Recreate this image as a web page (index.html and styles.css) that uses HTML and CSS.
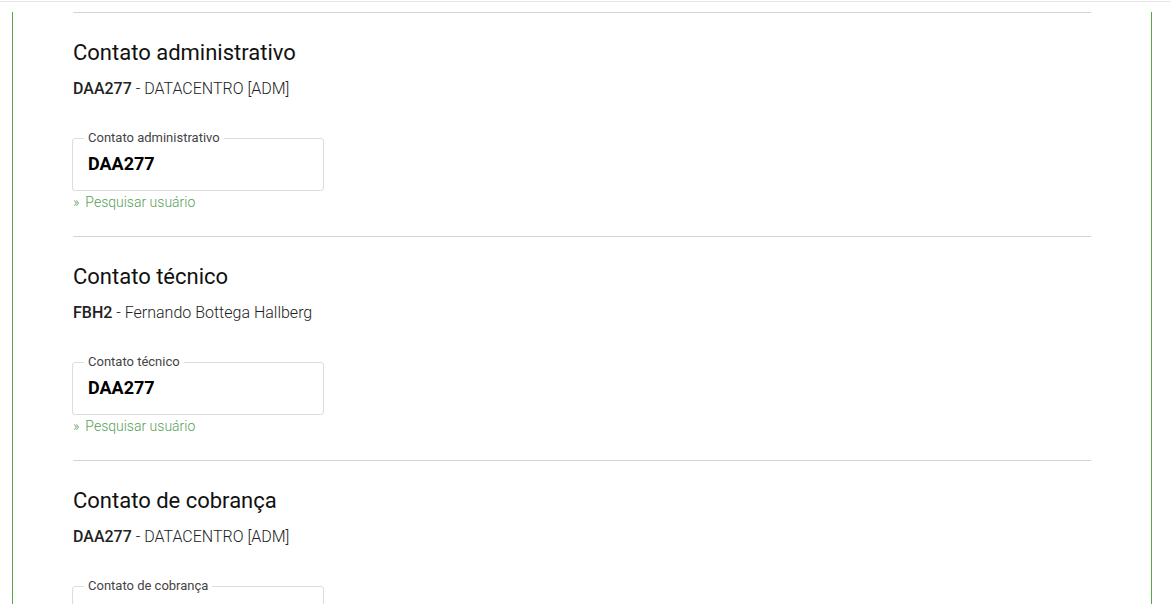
FILE: index.html
```html
<!DOCTYPE html>
<html lang="pt-BR">
<head>
<meta charset="utf-8">
<title>Contatos</title>
<link rel="stylesheet" href="styles.css">
</head>
<body>
<div class="topline"></div>
<main class="panel">
  <section class="contact">
    <h2 class="contact-title">Contato administrativo</h2>
    <p class="contact-current"><strong>DAA277</strong> - DATACENTRO [ADM]</p>
    <fieldset class="field">
      <legend class="field-label">Contato administrativo</legend>
      <div class="field-value">DAA277</div>
    </fieldset>
    <a class="search-link" href="#"><span class="raquo">»</span>Pesquisar usuário</a>
  </section>
  <section class="contact">
    <h2 class="contact-title">Contato técnico</h2>
    <p class="contact-current"><strong>FBH2</strong> - Fernando Bottega Hallberg</p>
    <fieldset class="field">
      <legend class="field-label">Contato técnico</legend>
      <div class="field-value">DAA277</div>
    </fieldset>
    <a class="search-link" href="#"><span class="raquo">»</span>Pesquisar usuário</a>
  </section>
  <section class="contact">
    <h2 class="contact-title">Contato de cobrança</h2>
    <p class="contact-current"><strong>DAA277</strong> - DATACENTRO [ADM]</p>
    <fieldset class="field">
      <legend class="field-label">Contato de cobrança</legend>
      <div class="field-value">DAA277</div>
    </fieldset>
    <a class="search-link" href="#"><span class="raquo">»</span>Pesquisar usuário</a>
  </section>
</main>
</body>
</html>
```

FILE: styles.css
```css
html, body {
  margin: 0;
  padding: 0;
  background: #ffffff;
  font-family: Roboto, "Liberation Sans", Arial, sans-serif;
  color: #1a1a1a;
  overflow: hidden;
}

.topline {
  margin-top: 1px;
  height: 1px;
  background: #e4e4e4;
}

.panel {
  margin-left: 12px;
  min-height: 700px;
  border-left: 1px solid #55a845;
  border-right: 1px solid #55a845;
  padding: 0 60px 0 60px;
  box-sizing: content-box;
  width: 1018px;
}

.contact {
  border-top: 1px solid #d4d4d4;
  padding-top: 26px;
  padding-bottom: 25px;
}

.contact:first-child {
  margin-top: 10px;
}

.contact-title {
  margin: 0;
  font-size: 22px;
  line-height: 28px;
  font-weight: 400;
  color: #111;
}

.contact-current {
  margin: 12px 0 0;
  font-size: 16px;
  line-height: 20px;
  font-weight: 300;
  color: #222;
}

.contact-current strong {
  font-weight: 500;
}

.field {
  margin: 32px 0 0 -1px;
  width: 220px;
  padding: 8px 15px 15px;
  border: 1px solid #dcdcdc;
  border-radius: 3px;
}

.field-label {
  margin-left: -4px;
  padding: 0 4px;
  font-size: 13px;
  line-height: 14px;
  color: #444;
}

.field-value {
  font-size: 18px;
  line-height: 22px;
  font-weight: 700;
  color: #000;
}

.search-link {
  display: block;
  margin-top: 2px;
  font-size: 14px;
  line-height: 18px;
  font-weight: 300;
  color: #58a058;
  text-decoration: none;
}

.raquo {
  margin-right: 6px;
}
```
